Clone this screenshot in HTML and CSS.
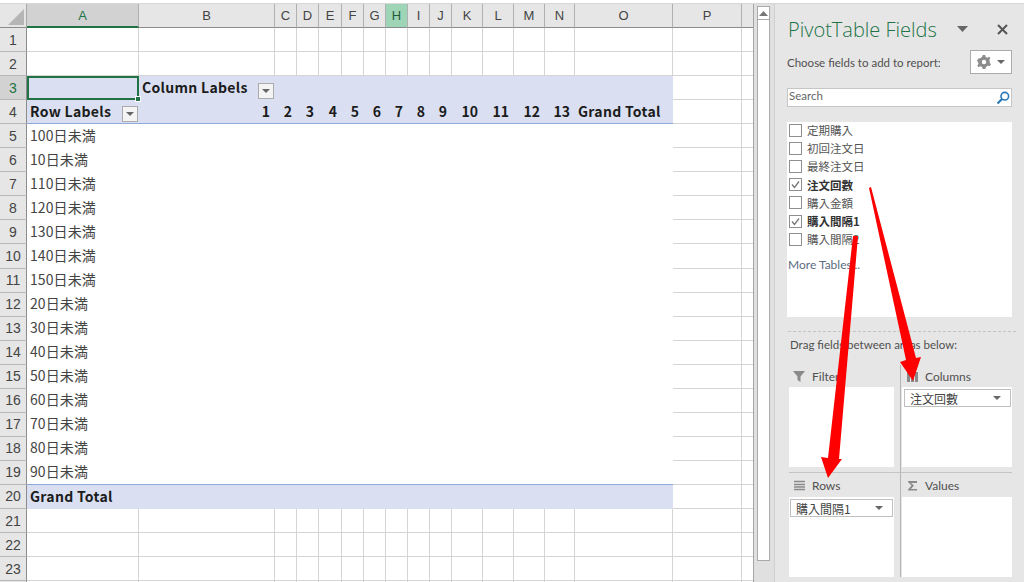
FILE: index.html
```html
<!DOCTYPE html>
<html lang="ja">
<head>
<meta charset="utf-8">
<title>PivotTable Fields</title>
<link rel="stylesheet" href="styles.css">
</head>
<body>
<div class="strip"></div>
<div class="body">
  <div class="sheet-wrap">
    <div class="sheet">
      <div class="corner"><svg width="16" height="16" viewBox="0 0 16 16"><path d="M16 0V16H0Z" fill="#b5b5b5"/></svg></div>
      <div class="ch ch-sel">A</div><div class="ch">B</div><div class="ch">C</div><div class="ch">D</div><div class="ch">E</div><div class="ch">F</div><div class="ch">G</div><div class="ch ch-green">H</div><div class="ch">I</div><div class="ch">J</div><div class="ch">K</div><div class="ch">L</div><div class="ch">M</div><div class="ch">N</div><div class="ch">O</div><div class="ch">P</div><div class="ch ch-end"></div>

      <div class="rh">1</div><div class="c"></div><div class="c"></div><div class="c"></div><div class="c"></div><div class="c"></div><div class="c"></div><div class="c"></div><div class="c"></div><div class="c"></div><div class="c"></div><div class="c"></div><div class="c"></div><div class="c"></div><div class="c"></div><div class="c"></div><div class="c"></div><div class="c"></div>
      <div class="rh">2</div><div class="c"></div><div class="c"></div><div class="c"></div><div class="c"></div><div class="c"></div><div class="c"></div><div class="c"></div><div class="c"></div><div class="c"></div><div class="c"></div><div class="c"></div><div class="c"></div><div class="c"></div><div class="c"></div><div class="c"></div><div class="c"></div><div class="c"></div>

      <div class="rh rh-sel">3</div>
      <div class="pv selected"><span class="handle"></span></div>
      <div class="pv b between">Column Labels<span class="filter"></span></div>
      <div class="pv span13"></div><div class="c"></div><div class="c"></div>

      <div class="rh">4</div>
      <div class="pv b between line">Row Labels<span class="filter"></span></div>
      <div class="pv b num line">1</div><div class="pv b num line">2</div><div class="pv b num line">3</div><div class="pv b num line">4</div><div class="pv b num line">5</div><div class="pv b num line">6</div><div class="pv b num line">7</div><div class="pv b num line">8</div><div class="pv b num line">9</div><div class="pv b num line">10</div><div class="pv b num line">11</div><div class="pv b num line">12</div><div class="pv b num line">13</div><div class="pv b line">Grand Total</div>
      <div class="c"></div><div class="c"></div>

      <div class="rh">5</div><div class="row">100日未満</div><div class="c"></div><div class="c"></div>
      <div class="rh">6</div><div class="row">10日未満</div><div class="c"></div><div class="c"></div>
      <div class="rh">7</div><div class="row">110日未満</div><div class="c"></div><div class="c"></div>
      <div class="rh">8</div><div class="row">120日未満</div><div class="c"></div><div class="c"></div>
      <div class="rh">9</div><div class="row">130日未満</div><div class="c"></div><div class="c"></div>
      <div class="rh">10</div><div class="row">140日未満</div><div class="c"></div><div class="c"></div>
      <div class="rh">11</div><div class="row">150日未満</div><div class="c"></div><div class="c"></div>
      <div class="rh">12</div><div class="row">20日未満</div><div class="c"></div><div class="c"></div>
      <div class="rh">13</div><div class="row">30日未満</div><div class="c"></div><div class="c"></div>
      <div class="rh">14</div><div class="row">40日未満</div><div class="c"></div><div class="c"></div>
      <div class="rh">15</div><div class="row">50日未満</div><div class="c"></div><div class="c"></div>
      <div class="rh">16</div><div class="row">60日未満</div><div class="c"></div><div class="c"></div>
      <div class="rh">17</div><div class="row">70日未満</div><div class="c"></div><div class="c"></div>
      <div class="rh">18</div><div class="row">80日未満</div><div class="c"></div><div class="c"></div>
      <div class="rh">19</div><div class="row line">90日未満</div><div class="c"></div><div class="c"></div>

      <div class="rh">20</div><div class="pv b span15">Grand Total</div><div class="c"></div><div class="c"></div>

      <div class="rh">21</div><div class="c"></div><div class="c"></div><div class="c"></div><div class="c"></div><div class="c"></div><div class="c"></div><div class="c"></div><div class="c"></div><div class="c"></div><div class="c"></div><div class="c"></div><div class="c"></div><div class="c"></div><div class="c"></div><div class="c"></div><div class="c"></div><div class="c"></div>
      <div class="rh">22</div><div class="c"></div><div class="c"></div><div class="c"></div><div class="c"></div><div class="c"></div><div class="c"></div><div class="c"></div><div class="c"></div><div class="c"></div><div class="c"></div><div class="c"></div><div class="c"></div><div class="c"></div><div class="c"></div><div class="c"></div><div class="c"></div><div class="c"></div>
      <div class="rh">23</div><div class="c"></div><div class="c"></div><div class="c"></div><div class="c"></div><div class="c"></div><div class="c"></div><div class="c"></div><div class="c"></div><div class="c"></div><div class="c"></div><div class="c"></div><div class="c"></div><div class="c"></div><div class="c"></div><div class="c"></div><div class="c"></div><div class="c"></div>
      <div class="rh"></div><div class="c"></div><div class="c"></div><div class="c"></div><div class="c"></div><div class="c"></div><div class="c"></div><div class="c"></div><div class="c"></div><div class="c"></div><div class="c"></div><div class="c"></div><div class="c"></div><div class="c"></div><div class="c"></div><div class="c"></div><div class="c"></div><div class="c"></div>
    </div>
  </div>

  <div class="scrollbar">
    <div class="sb-up"><svg width="9" height="5" viewBox="0 0 9 5"><path d="M4.500 0L9 5H0Z" fill="#777"/></svg></div>
    <div class="sb-thumb"></div>
  </div>

  <aside class="panel">
    <div class="title-row">
      <div class="title">PivotTable Fields</div>
      <svg class="title-caret" width="11" height="6" viewBox="0 0 11 6"><path d="M0 0H11L5.500 6Z" fill="#666"/></svg>
      <svg class="title-x" width="11" height="11" viewBox="0 0 11 11"><path d="M1 1L10 10M10 1L1 10" stroke="#555" stroke-width="2"/></svg>
    </div>
    <div class="choose-row">
      <span>Choose fields to add to report:</span>
      <div class="gear">
        <svg width="14" height="14" viewBox="0 0 14 14"><path d="M5.800 0H8.200L8.600 2L10.400 2.800L12.100 1.700L13.400 3.300L12.200 5L12.800 6V8L14 9.200L12.700 11L10.700 10.700L9 12L8.300 14H5.700L5 12L3.300 11.300L1.500 12.300L0.300 10.500L1.500 9L1 7L0 5.500L1.400 3.500L3.200 3.300L5 2Z" fill="#8c8c8c"/><circle cx="7" cy="7" r="2.200" fill="#fff"/></svg>
        <svg width="8" height="4" viewBox="0 0 8 4"><path d="M0 0H8L4 4Z" fill="#666"/></svg>
      </div>
    </div>
    <div class="search">
      <span>Search</span>
      <svg width="14" height="14" viewBox="0 0 14 14"><circle cx="8.800" cy="5.200" r="3.800" fill="none" stroke="#2b79b9" stroke-width="1.600"/><path d="M6 8L1.500 12.500" stroke="#2b79b9" stroke-width="2.200"/></svg>
    </div>
    <div class="fields">
      <div class="field"><span class="check"></span>定期購入</div>
      <div class="field"><span class="check"></span>初回注文日</div>
      <div class="field"><span class="check"></span>最終注文日</div>
      <div class="field on"><span class="check"><svg width="11" height="11" viewBox="0 0 11 11"><path d="M2 5.500L4.500 8.500L9 2.500" fill="none" stroke="#777" stroke-width="1.300"/></svg></span>注文回數</div>
      <div class="field"><span class="check"></span>購入金額</div>
      <div class="field on"><span class="check"><svg width="11" height="11" viewBox="0 0 11 11"><path d="M2 5.500L4.500 8.500L9 2.500" fill="none" stroke="#777" stroke-width="1.300"/></svg></span>購入間隔1</div>
      <div class="field"><span class="check"></span>購入間隔2</div>
      <div class="more">More Tables...</div>
    </div>
    <div class="dashed"></div>
    <div class="drag">Drag fields between areas below:</div>
    <div class="areas">
      <div class="area area-left area-top">
        <div class="area-head"><svg width="13" height="13" viewBox="0 0 13 13"><path d="M0 1H12L7.500 6.500V12L4.500 10V6.500Z" fill="#8a8a8a"/></svg>Filters</div>
        <div class="area-box"></div>
      </div>
      <div class="area area-top">
        <div class="area-head"><svg width="13" height="13" viewBox="0 0 13 13"><path d="M1 2H4V12H1ZM5 2H8V12H5ZM9 2H12V12H9Z" fill="#8a8a8a"/></svg>Columns</div>
        <div class="area-box box-right"><div class="chip">注文回數<svg width="8" height="4" viewBox="0 0 8 4"><path d="M0 0H8L4 4Z" fill="#666"/></svg></div></div>
      </div>
      <div class="area area-left">
        <div class="area-head"><svg width="13" height="13" viewBox="0 0 13 13"><path d="M1 2.500H12M1 5.500H12M1 8H12M1 10.500H12" stroke="#8a8a8a" stroke-width="1.400"/></svg>Rows</div>
        <div class="area-box"><div class="chip">購入間隔1<svg width="8" height="4" viewBox="0 0 8 4"><path d="M0 0H8L4 4Z" fill="#666"/></svg></div></div>
      </div>
      <div class="area">
        <div class="area-head"><svg width="13" height="13" viewBox="0 0 13 13"><path d="M2 2H11V4H5L8 6.500L5 10H11V11.500H2V10.500L5.500 6.500L2 3Z" fill="#8a8a8a"/></svg>Values</div>
        <div class="area-box"></div>
      </div>
    </div>
  </aside>
</div>
<svg class="arrows" width="1024" height="582" viewBox="0 0 1024 582">
  <path d="M869 188L871 187L916 358L921 357L913 381L900 362L906 360Z" fill="#fe0000"/>
  <path d="M853 236L858 236L839 459L842 459L828 478L821 457L828 458Z" fill="#fe0000"/>
</svg>
</body>
</html>
```

FILE: styles.css
```css
* { box-sizing: border-box; }
html, body { margin: 0; padding: 0; width: 1024px; height: 582px; overflow: hidden; background: #fff; }
body { font-family: "Noto Sans CJK JP", "Liberation Sans", sans-serif; color: #222; position: relative; }

.strip { height: 4px; background: #fff; border-bottom: 1px solid #d8d8d8; }
.body { display: flex; height: 578px; }

.sheet-wrap { width: 754px; height: 578px; overflow: hidden; border-right: 1px solid #a6a6a6; flex: none; }
.sheet {
  display: grid;
  grid-template-columns: 27px 112px 136px 22px 22px 23px 22px 22px 22px 22px 22px 31px 31px 31px 30px 98px 69px 12px;
  grid-auto-rows: 24.050px;
  font-size: 14px;
}
.corner { background: #e6e6e6; border-right: 1px solid #a6a6a6; border-bottom: 1px solid #8c8c8c; display: flex; align-items: flex-end; justify-content: flex-end; padding: 0 2px 2px 0; }
.ch { background: #e6e6e6; border-right: 1px solid #b0b0b0; border-bottom: 1px solid #8c8c8c; display: flex; align-items: center; justify-content: center; font-family: "Liberation Sans", sans-serif; font-size: 13px; color: #444; }
.ch-sel { background: #d2d2d2; color: #217346; border-bottom: 2px solid #217346; }
.ch-green { background: #9fd5b7; color: #1f5d3a; }
.ch-end { border-right: none; }
.rh { background: #e6e6e6; border-right: 1px solid #8c8c8c; border-bottom: 1px solid #b8b8b8; display: flex; align-items: center; justify-content: center; font-family: "Liberation Sans", sans-serif; font-size: 14px; color: #444; }
.rh-sel { background: #d2d2d2; color: #217346; }
.c { border-right: 1px solid #d4d4d4; border-bottom: 1px solid #d4d4d4; background: #fff; }

.pv { background: #dae0f2; display: flex; align-items: center; padding: 0 3px 2px; position: relative; white-space: nowrap; }
.b { font-weight: 700; color: #1c1c1c; letter-spacing: 0.3px; }
.num { justify-content: flex-end; padding-right: 5px; letter-spacing: 0; }
.between { justify-content: space-between; padding-right: 1px; }
.line { border-bottom: 1px solid #8ea9db; }
.span13 { grid-column: span 13; }
.span15 { grid-column: span 15; }
.row { grid-column: span 15; display: flex; align-items: center; padding: 0 3px 3px; background: #fff; color: #444; letter-spacing: 0.100px; }
.selected { box-shadow: inset 0 0 0 2px #217346; }
.handle { position: absolute; right: -2px; bottom: -2px; background: #217346; border: 1px solid #fff; box-sizing: content-box; width: 4px; height: 4px; z-index: 2; }
.filter { width: 16px; height: 16px; background: #f4f4f4; border: 1px solid #ababab; display: flex; align-items: center; justify-content: center; flex: none; align-self: flex-end; margin-bottom: -1px; }
.filter::after { content: ""; border-left: 4px solid transparent; border-right: 4px solid transparent; border-top: 4px solid #666; }

.scrollbar { width: 21px; flex: none; background: #e0e0e0; padding: 2px 4px 0 3px; border-right: 1px solid #cfcfcf; height: 578px; }
.sb-up { height: 14px; background: #fff; border: 1px solid #aaa; display: flex; align-items: center; justify-content: center; }
.sb-thumb { height: 541px; background: #fff; border: 1px solid #aaa; border-top: none; }

.panel { width: 249px; flex: none; background: #e6e6e6; height: 578px; font-family: "Lato", "Noto Sans CJK JP", sans-serif; display: flex; flex-direction: column; color: #505050; font-size: 11.500px; padding: 0 12px; }
.title-row { display: flex; align-items: center; height: 45px; padding-top: 5px; padding-left: 1px; }
.title { font-size: 20px; font-weight: 300; color: #217346; font-family: "Open Sans", sans-serif; flex: 1; white-space: nowrap; }
.title-caret { margin-right: 29px; }
.title-x { margin-right: 4px; }
.choose-row { display: flex; align-items: center; justify-content: space-between; height: 24px; margin-top: 1px; }
.gear { width: 42px; height: 24px; background: #fff; border: 1px solid #ababab; display: flex; align-items: center; justify-content: center; gap: 6px; }
.search { margin-top: 14px; height: 19px; background: #fff; border: 1px solid #c6c6c6; display: flex; align-items: center; justify-content: space-between; padding: 0 1px 4px 1px; font-size: 11.500px; color: #666; }
.search svg { margin-bottom: -4px; }
.fields { margin-top: 15px; height: 195px; background: #fff; padding: 0 2px; flex: none; }
.field { display: flex; align-items: center; height: 18.200px; font-size: 11.500px; color: #555; gap: 5px; font-family: "Noto Sans CJK JP", sans-serif; }
.field:first-child { margin-top: -1px; }
.on { font-weight: 700; color: #333; }
.check { width: 13px; height: 13px; background: #fff; border: 1px solid #8f8f8f; flex: none; display: flex; align-items: center; justify-content: center; }
.more { margin-top: 9px; margin-left: -1px; font-size: 12px; color: #5c6c82; }
.dashed { margin-top: 14px; border-top: 1px dashed #c4c4c4; margin-left: 1px; margin-right: -4px; }
.drag { margin: 2px 0 0 3px; font-size: 11.500px; height: 20px; display: flex; align-items: center; }
.areas { margin-top: 11px; display: grid; grid-template-columns: 112px 111px; grid-template-rows: 108px 104px; margin-left: 2px; }
.area { padding-left: 1px; display: flex; flex-direction: column; }
.area-left { border-right: 1px solid #b4b4b4; padding-left: 0; padding-right: 6px; }
.area-top { border-bottom: 1px solid #c4c4c4; padding-bottom: 5px; }
.area-head { flex: 1; display: flex; align-items: center; gap: 6px; padding-left: 4px; font-size: 12px; }
.area-box { background: #fff; height: 80px; flex: none; padding: 2px 1px; }
.box-right { padding: 2px 1px 2px 2px; }
.chip { height: 18px; background: #fff; border: 1px solid #c0c0c0; display: flex; align-items: center; justify-content: space-between; padding: 0 9px 0 5px; font-family: "Noto Sans CJK JP", sans-serif; font-size: 12px; color: #444; }

.arrows { position: absolute; left: 0; top: 0; pointer-events: none; }
```
